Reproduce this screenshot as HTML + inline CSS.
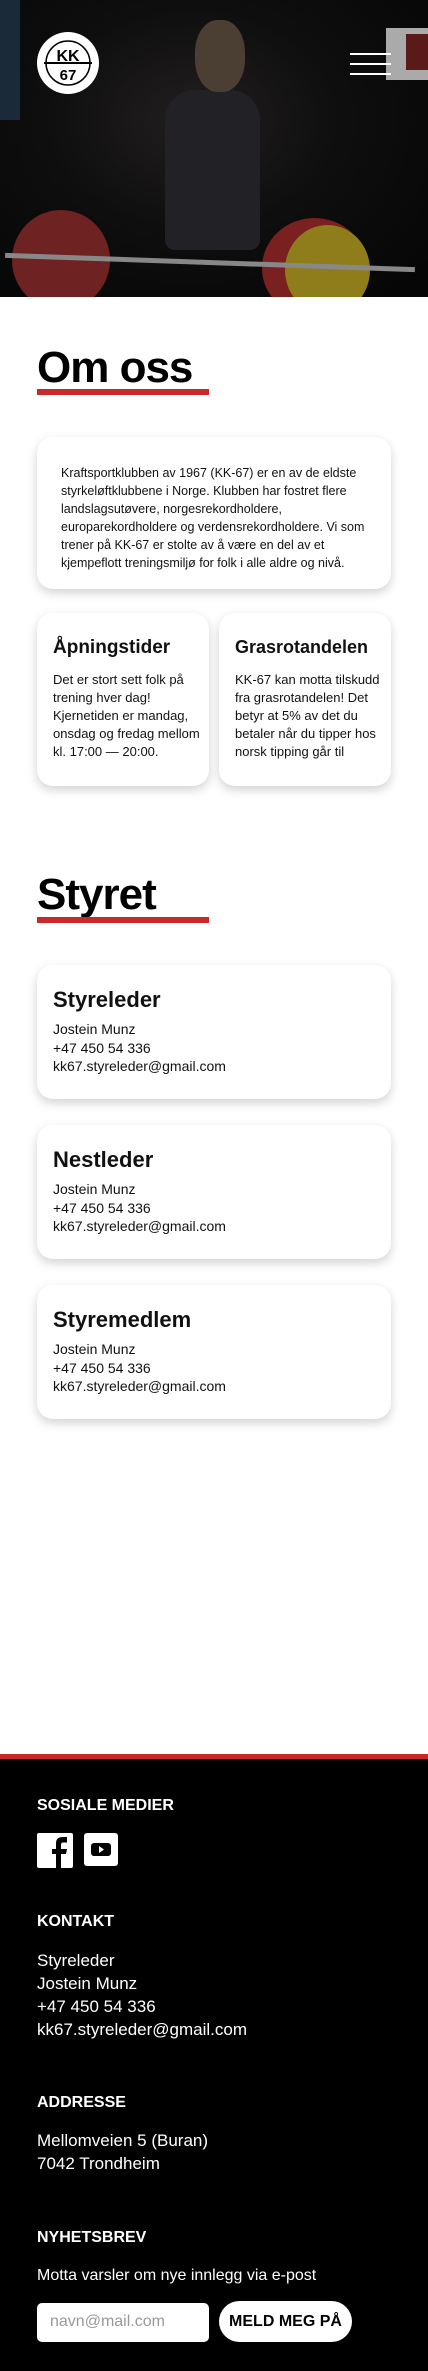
<!DOCTYPE html>
<html><head><meta charset="utf-8"><style>
*{margin:0;padding:0;box-sizing:border-box}
body{width:428px;height:2371px;background:#fff;font-family:"Liberation Sans",sans-serif;color:#111;position:relative;overflow:hidden}
.abs{position:absolute}
.hero{left:0;top:0;width:428px;height:297px;background:radial-gradient(ellipse at 45% 40%,#221e20 0%,#0e0e0e 45%,#050505 100%);overflow:hidden}
.card{position:absolute;background:#fff;border-radius:16px;box-shadow:0 4px 10px rgba(0,0,0,.18)}
.h1{font-size:44px;font-weight:bold;letter-spacing:-1px;color:#000}
.bar{background:#c8282a;height:6px}
.ch{font-size:19px;font-weight:bold;position:absolute}
.foot{left:0;top:1759px;width:428px;height:612px;background:#000;color:#fff}
.fh{position:absolute;left:37px;font-size:16px;font-weight:bold}
.ft{position:absolute;left:37px;font-size:17px;line-height:23px}
.sc{left:37px;width:354px;height:134px}
.sc .ch{left:16px;top:22px;font-size:22px}
.sc .b{position:absolute;left:16px;top:55px;font-size:14px;line-height:18.5px}
</style></head><body>
<div class="abs hero">
 <div class="abs" style="left:0;top:0;width:20px;height:120px;background:#1a2a38"></div>
 <div class="abs" style="left:386px;top:28px;width:42px;height:52px;background:#aaa"></div>
 <div class="abs" style="left:406px;top:34px;width:22px;height:36px;background:#5a1a1a"></div>
 <div class="abs" style="left:165px;top:90px;width:95px;height:160px;background:#222226;border-radius:30px 30px 10px 10px"></div>
 <div class="abs" style="left:195px;top:20px;width:50px;height:72px;background:#4a3f32;border-radius:45%"></div>
 <div class="abs" style="left:12px;top:210px;width:98px;height:100px;background:#6e2222;border-radius:50%"></div>
 <div class="abs" style="left:262px;top:218px;width:105px;height:100px;background:#7a2020;border-radius:50%"></div>
 <div class="abs" style="left:285px;top:225px;width:85px;height:90px;background:#8f7c1a;border-radius:50%"></div>
 <div class="abs" style="left:5px;top:260px;width:410px;height:5px;background:#888;transform:rotate(2deg)"></div>
 <svg class="abs" style="left:36px;top:31px" width="64" height="64" viewBox="0 0 64 64"><circle cx="32" cy="32" r="31" fill="#fff"/><circle cx="32" cy="32" r="22" fill="none" stroke="#000" stroke-width="1.5"/><text x="32" y="30" text-anchor="middle" font-size="16" font-weight="bold" font-family="Liberation Sans">KK</text><rect x="8" y="31" width="48" height="2" fill="#000"/><text x="32" y="49" text-anchor="middle" font-size="15" font-weight="bold" font-family="Liberation Sans">67</text></svg>
 <div class="abs" style="left:350px;top:53px;width:41px;height:2px;background:#fff"></div>
 <div class="abs" style="left:350px;top:63px;width:41px;height:2px;background:#fff"></div>
 <div class="abs" style="left:350px;top:73px;width:41px;height:2px;background:#fff"></div>
</div>

<div class="abs h1" style="left:37px;top:343px">Om oss</div>
<div class="abs bar" style="left:37px;top:389px;width:172px"></div>
<div class="card" style="left:37px;top:437px;width:354px;height:152px">
 <div class="abs" style="left:24px;top:27px;width:310px;font-size:12.5px;line-height:18px">Kraftsportklubben av 1967 (KK-67) er en av de eldste styrkeløftklubbene i Norge. Klubben har fostret flere landslagsutøvere, norgesrekordholdere, europarekordholdere og verdensrekordholdere. Vi som trener på KK-67 er stolte av å være en del av et kjempeflott treningsmiljø for folk i alle aldre og nivå.</div>
</div>
<div class="card" style="left:37px;top:613px;width:172px;height:173px">
 <div class="ch" style="left:16px;top:24px">Åpningstider</div>
 <div class="abs" style="left:16px;top:58px;width:150px;font-size:13px;line-height:18px">Det er stort sett folk på trening hver dag! Kjernetiden er mandag, onsdag og fredag mellom kl. 17:00 — 20:00.</div>
</div>
<div class="card" style="left:219px;top:613px;width:172px;height:173px">
 <div class="ch" style="left:16px;top:24px;font-size:18px">Grasrotandelen</div>
 <div class="abs" style="left:16px;top:58px;width:150px;font-size:13px;line-height:18px">KK-67 kan motta tilskudd fra grasrotandelen! Det betyr at 5% av det du betaler når du tipper hos norsk tipping går til</div>
</div>

<div class="abs h1" style="left:37px;top:870px">Styret</div>
<div class="abs bar" style="left:37px;top:917px;width:172px"></div>

<div class="card sc" style="top:965px"><div class="ch">Styreleder</div><div class="b">Jostein Munz<br>+47 450 54 336<br>kk67.styreleder@gmail.com</div></div>
<div class="card sc" style="top:1125px"><div class="ch">Nestleder</div><div class="b">Jostein Munz<br>+47 450 54 336<br>kk67.styreleder@gmail.com</div></div>
<div class="card sc" style="top:1285px"><div class="ch">Styremedlem</div><div class="b">Jostein Munz<br>+47 450 54 336<br>kk67.styreleder@gmail.com</div></div>

<div class="abs bar" style="left:0;top:1754px;width:428px;height:5px"></div>
<div class="abs foot">
 <div class="fh" style="top:38px">SOSIALE MEDIER</div>
 <svg class="abs" style="left:37px;top:74px" width="36" height="35" viewBox="0 0 36 35"><rect width="36" height="35" rx="2" fill="#fff"/><path d="M24 35V21h5l1-5h-6v-4c0-1.5.5-2.5 2.5-2.5H30V4h-4.5c-4.5 0-6.5 2.5-6.5 6.5V16h-4v5h4v14z" fill="#000"/></svg>
 <svg class="abs" style="left:84px;top:74px" width="34" height="33" viewBox="0 0 34 33"><rect width="34" height="33" rx="3" fill="#fff"/><rect x="7" y="10" width="20" height="13" rx="3" fill="#000"/><path d="M15 13v7l5-3.5z" fill="#fff"/></svg>
 <div class="fh" style="top:154px">KONTAKT</div>
 <div class="ft" style="top:190px">Styreleder<br>Jostein Munz<br>+47 450 54 336<br>kk67.styreleder@gmail.com</div>
 <div class="fh" style="top:335px">ADDRESSE</div>
 <div class="ft" style="top:370px">Mellomveien 5 (Buran)<br>7042 Trondheim</div>
 <div class="fh" style="top:470px">NYHETSBREV</div>
 <div class="ft" style="top:505px;font-size:16px">Motta varsler om nye innlegg via e-post</div>
 <div class="abs" style="left:37px;top:544px;width:172px;height:39px;background:#fff;border-radius:5px;color:#999;font-size:16px;padding:10px 13px">navn@mail.com</div>
 <div class="abs" style="left:219px;top:542px;width:133px;height:41px;background:#fff;border-radius:21px;color:#000;font-size:16px;font-weight:bold;text-align:center;line-height:41px">MELD MEG PÅ</div>
</div>
</body></html>
